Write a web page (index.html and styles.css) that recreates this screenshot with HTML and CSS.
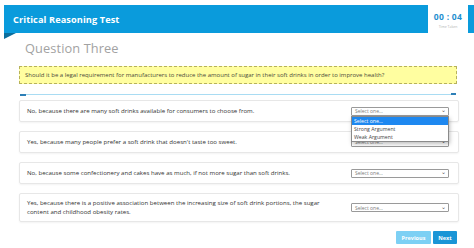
FILE: index.html
```html
<!DOCTYPE html>
<html>
<head>
<meta charset="utf-8">
<link rel="stylesheet" href="styles.css">
</head>
<body>
<div class="top">
  <div class="titlebar"><span class="title">Critical Reasoning Test</span></div>
  <div class="timer">
    <div class="time">00 : 04</div>
    <div class="taken">Time Taken</div>
  </div>
  <div class="strip"></div>
</div>
<div class="main">
  <h1 class="qhead">Question Three</h1>
  <div class="prompt">Should it be a legal requirement for manufacturers to reduce the amount of sugar in their soft drinks in order to improve health?</div>
  <div class="rule"></div>
  <div class="cards">
    <div class="card">
      <div class="text">No, because there are many soft drinks available for consumers to choose from.</div>
      <div class="selwrap">
        <div class="select open"><span>Select one...</span><span class="chev">&#8964;</span></div>
        <div class="menu">
          <div class="opt active">Select one...</div>
          <div class="opt">Strong Argument</div>
          <div class="opt">Weak Argument</div>
        </div>
      </div>
    </div>
    <div class="card">
      <div class="text">Yes, because many people prefer a soft drink that doesn't taste too sweet.</div>
      <div class="selwrap"><div class="select"><span>Select one...</span><span class="chev">&#8964;</span></div></div>
    </div>
    <div class="card">
      <div class="text">No, because some confectionery and cakes have as much, if not more sugar than soft drinks.</div>
      <div class="selwrap"><div class="select"><span>Select one...</span><span class="chev">&#8964;</span></div></div>
    </div>
    <div class="card tall">
      <div class="text">Yes, because there is a positive association between the increasing size of soft drink portions, the sugar content and childhood obesity rates.</div>
      <div class="selwrap"><div class="select"><span>Select one...</span><span class="chev">&#8964;</span></div></div>
    </div>
  </div>
  <div class="nav">
    <button class="btn prev">Previous</button>
    <button class="btn next">Next</button>
  </div>
</div>
</body>
</html>
```
FILE: styles.css
```css
* { box-sizing: border-box; }
html, body { margin: 0; padding: 0; background: #ffffff; }
body { font-family: "Open Sans", "DejaVu Sans", sans-serif; color: #3a3a3a; width: 474px; height: 248px; overflow: hidden; }

.top { display: flex; padding-top: 5px; height: 33px; }
.titlebar { margin-left: 4px; width: 424px; height: 28px; background: #0a9bdc; position: relative; display: flex; align-items: center; padding-left: 9px; }
.titlebar::after { content: ""; position: absolute; left: 0; top: 28px; border-top: 6px solid #0b6f9e; border-left: 12px solid transparent; transform: scaleX(-1); }
.title { color: #fff; font-weight: 700; font-size: 9.2px; letter-spacing: 0.1px; }
.timer { width: 40px; display: flex; flex-direction: column; align-items: center; padding-top: 7px; }
.time { color: #1f8fcf; font-weight: 700; font-size: 8.5px; line-height: 10px; letter-spacing: 0.3px; }
.taken { color: #b5b5b5; font-size: 3.5px; line-height: 5px; margin-top: 2px; }
.strip { flex: 1; background: #0a9bdc; height: 28px; }

.main { padding: 0 15px 0 19px; }
.qhead { margin: 7px 0 0 6px; font-weight: 400; font-size: 12.8px; line-height: 16px; color: #a2a2a2; letter-spacing: 0.1px; }
.prompt { margin-top: 10px; width: 438px; height: 18px; background: #fffea0; border: 1px dashed #b7b25c; font-size: 6px; line-height: 16px; padding-left: 5px; color: #4a4a3a; white-space: nowrap; }

.rule { margin: 10px 3px 0 1px; height: 1px; background: #a9dcf3; position: relative; }
.rule::before { content: ""; position: absolute; left: 0; top: 0; width: 6px; height: 2px; background: #2d7fb7; }
.rule::after { content: ""; position: absolute; right: 0; top: -1px; width: 5px; height: 2px; background: #2d7fb7; }

.cards { margin-top: 5px; display: flex; flex-direction: column; gap: 9px; }
.card { width: 440px; height: 22px; border: 1px solid #e7e7e7; border-radius: 2px; box-shadow: 0 1px 2px rgba(0,0,0,0.05); display: flex; align-items: center; padding: 0 9px 0 7px; }
.card.tall { height: 29px; }
.text { flex: 1; font-size: 6.1px; line-height: 8.5px; color: #333; padding-right: 20px; }
.selwrap { position: relative; width: 98px; }
.select { height: 9px; border: 1px solid #9a9a9a; border-radius: 1px; display: flex; justify-content: space-between; align-items: center; padding: 0 2px 0 3px; font-size: 5px; color: #7a7a7a; background: #fff; }
.chev { font-size: 6px; line-height: 6px; color: #555; transform: translateY(-1.5px); }
.menu { position: absolute; left: 0; top: 9px; width: 98px; background: #fff; border: 1px solid #8a8a8a; box-shadow: 1px 2px 4px rgba(0,0,0,0.25); z-index: 2; }
.opt { height: 8px; font-size: 5.2px; line-height: 8px; padding-left: 2px; color: #444; }
.opt.active { background: #1e88f0; color: #fff; }

.nav { display: flex; justify-content: flex-end; gap: 2px; margin-top: 9px; width: 438px; }
.btn { border: none; height: 13px; padding: 0; font-family: inherit; font-weight: 700; font-size: 5.5px; color: #fff; border-radius: 1px; }
.prev { width: 35px; background: #7dd0f4; }
.next { width: 24px; background: #1a95d6; }
```
